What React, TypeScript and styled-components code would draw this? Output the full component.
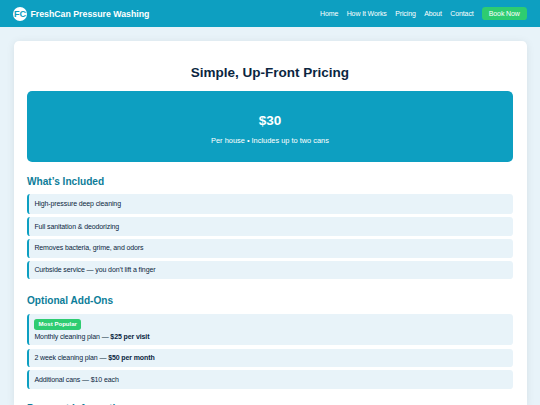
import React from 'react';
import styled, { createGlobalStyle } from 'styled-components';

const GlobalStyle = createGlobalStyle`
  html {
    font-size: 6.75px;
  }
  body {
    margin: 0;
    background: #e8f3f9;
    color: #0a2540;
    font-family: 'Liberation Sans', Arial, sans-serif;
    height: 100vh;
    overflow: hidden;
  }
  * {
    box-sizing: border-box;
  }
`;

const Header = styled.header`
  display: flex;
  align-items: center;
  justify-content: space-between;
  height: 4rem;
  padding: 0 2rem;
  background: #0d9fc1;
  color: #fff;
`;
const Brand = styled.div`
  display: flex;
  align-items: center;
  gap: 0.5rem;
  margin-left: -0.07rem;
  font-size: 1.3rem;
  font-weight: 700;
`;
const Logo = styled.div`
  display: flex;
  align-items: center;
  justify-content: center;
  width: 14px;
  height: 14px;
  border-radius: 50%;
  background: #fff;
  color: #0d9fc1;
  font-size: 1.35rem;
`;
const Nav = styled.nav`
  display: flex;
  align-items: center;
  gap: 1.25rem;
  font-size: 7px;
  letter-spacing: -0.12px;
`;
const NavLink = styled.a`
  color: #fff;
  text-decoration: none;
`;
const BookButton = styled(NavLink)`
  padding: 0.46rem 1rem;
  line-height: 1.15rem;
  border-radius: 0.5rem;
  background: #2ecc71;
`;

const Card = styled.main`
  margin: 2rem 2rem 0;
  padding: 2rem 2rem 0;
  height: calc(100vh - 6rem);
  overflow: hidden;
  border-radius: 0.75rem 0.75rem 0 0;
  background: #fff;
  box-shadow: 0 0.25rem 1.25rem rgba(0, 0, 0, 0.08);
`;
const Title = styled.h2`
  margin: 1.66rem 0 1.55rem;
  line-height: 2.28rem;
  font-size: 2rem;
  text-align: center;
`;
const PriceBox = styled.section`
  height: 71px;
  padding-top: 3.2rem;
  border-radius: 0.75rem;
  background: #0d9fc1;
  color: #fff;
  text-align: center;
`;
const Price = styled.div`
  font-size: 2rem;
  font-weight: 700;
  line-height: 2.3rem;
`;
const PriceNote = styled.div`
  margin-top: 1.3rem;
  font-size: 1.1rem;
  line-height: 1.25rem;
`;
const SectionTitle = styled.h3`
  margin: 2rem 0 1rem;
  color: #0d7d99;
  font-size: 1.5rem;
  line-height: 1.75rem;
`;
const List = styled.ul<{ $gap?: string }>`
  margin: 0 0 ${({ $gap }) => $gap || '2.1rem'};
  padding: 0;
  list-style: none;
`;
const Item = styled.li<{ $padY?: string }>`
  padding: ${({ $padY }) => $padY || '0.8rem'} 0.8rem;
  border-left: 2px solid #0d9fc1;
  border-radius: 0.5rem;
  background: #e8f3f9;
  font-size: 7px;
  letter-spacing: -0.11px;
  line-height: 1.15rem;

  & + & {
    margin-top: 0.48rem;
  }
`;
const Badge = styled.span`
  display: block;
  width: fit-content;
  margin-bottom: 0.35rem;
  padding: 0.27rem 0.62rem;
  border-radius: 0.4rem;
  background: #2ecc71;
  color: #fff;
  font-size: 0.9rem;
  font-weight: 700;
  letter-spacing: 0;
`;

const links = ['Home', 'How It Works', 'Pricing', 'About', 'Contact'];

const included = [
  'High-pressure deep cleaning',
  'Full sanitation & deodorizing',
  'Removes bacteria, grime, and odors',
  'Curbside service — you don’t lift a finger',
];

const App = () => {
  return (
    <>
      <GlobalStyle />
      <Header>
        <Brand>
          <Logo>FC</Logo>
          <span>FreshCan Pressure Washing</span>
        </Brand>
        <Nav>
          {links.map(link => (
            <NavLink key={link}>{link}</NavLink>
          ))}
          <BookButton>Book Now</BookButton>
        </Nav>
      </Header>
      <Card>
        <Title>Simple, Up-Front Pricing</Title>
        <PriceBox>
          <Price>$30</Price>
          <PriceNote>Per house • Includes up to two cans</PriceNote>
        </PriceBox>
        <SectionTitle>What’s Included</SectionTitle>
        <List $gap="2.38rem">
          {included.map((item, index) => (
            <Item key={item} $padY={index === 0 ? '0.9rem' : undefined}>
              {item}
            </Item>
          ))}
        </List>
        <SectionTitle>Optional Add-Ons</SectionTitle>
        <List>
          <Item $padY="0.73rem">
            <Badge>Most Popular</Badge>
            Monthly cleaning plan — <strong>$25 per visit</strong>
          </Item>
          <Item>
            2 week cleaning plan — <strong>$50 per month</strong>
          </Item>
          <Item>Additional cans — $10 each</Item>
        </List>
        <SectionTitle>Payment Information</SectionTitle>
      </Card>
    </>
  );
};
export default App;
